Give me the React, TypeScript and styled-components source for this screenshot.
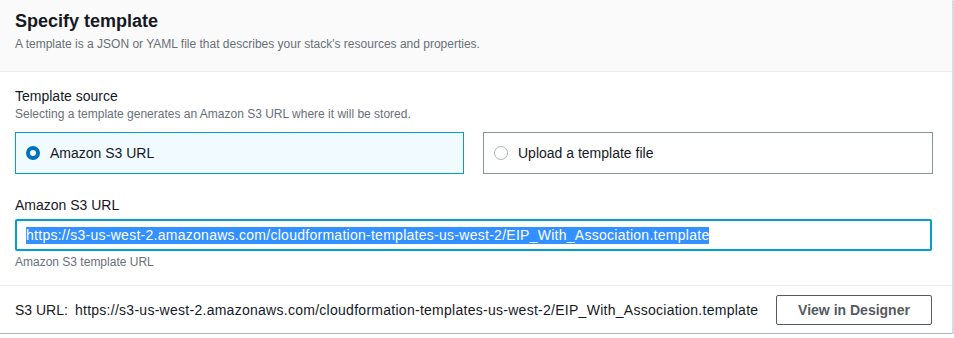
import React from "react";
import styled, { createGlobalStyle } from "styled-components";

const GlobalStyle = createGlobalStyle`
  html, body { margin: 0; padding: 0; background: #ffffff; }
  body { font-family: "Liberation Sans", Arial, sans-serif; color: #16191f; }
  * { box-sizing: border-box; }
`;

const Card = styled.section`
  width: 953px;
  height: 334px;
  background: #ffffff;
  border-right: 1px solid #d5dbdb;
  border-bottom: 1px solid #aab7b8;
  box-shadow: 1px 1px 1px 0 rgba(0, 28, 36, 0.15);
  display: flex;
  flex-direction: column;
`;

const Header = styled.header`
  height: 72px;
  background: #fafafa;
  border-bottom: 1px solid #eaeded;
  padding: 10px 20px 0 15px;
`;

const Title = styled.h2`
  margin: 0;
  font-size: 18px;
  line-height: 22px;
  font-weight: 700;
  color: #16191f;
`;

const Description = styled.p<{ $top?: number }>`
  margin: ${(p) => p.$top ?? 0}px 0 0;
  font-size: 12px;
  line-height: 16px;
  color: #687078;
`;

const Body = styled.div`
  padding: 14px 20px 0 15px;
  display: flex;
  flex-direction: column;
`;

const Label = styled.div`
  font-size: 14px;
  line-height: 20px;
  color: #16191f;
`;

const TileGrid = styled.div`
  margin-top: 10px;
  display: grid;
  grid-template-columns: 449px 450px;
  column-gap: 19px;
`;

const Tile = styled.label<{ $selected?: boolean }>`
  height: 42px;
  display: flex;
  align-items: center;
  gap: 10px;
  padding-left: 10px;
  border: 1px solid ${(p) => (p.$selected ? "#00a1c9" : "#879596")};
  background: ${(p) => (p.$selected ? "#f1faff" : "#ffffff")};
  font-size: 14px;
  color: #16191f;
`;

const Radio = styled.span<{ $checked?: boolean }>`
  width: 14px;
  height: 14px;
  border-radius: 50%;
  flex: none;
  background: #ffffff;
  border: ${(p) => (p.$checked ? "4px solid #0073bb" : "1px solid #aab7b8")};
`;

const Field = styled.div`
  margin-top: 21px;
  display: flex;
  flex-direction: column;
`;

const InputBox = styled.div`
  margin-top: 4px;
  height: 32px;
  border: 2px solid #00a1c9;
  border-radius: 2px;
  padding-left: 9px;
  display: flex;
  align-items: center;
  font-size: 14px;
  color: #16191f;
`;

const Selected = styled.span`
  background: #3390ff;
  color: #ffffff;
  line-height: 17px;
  letter-spacing: 0.27px;
  white-space: nowrap;
`;

const Footer = styled.div`
  margin-top: 15px;
  border-top: 1px solid #eaeded;
  padding: 9px 20px 0 15px;
  display: flex;
  align-items: center;
  justify-content: space-between;
`;

const UrlLine = styled.div`
  display: flex;
  gap: 7px;
  font-size: 14px;
  line-height: 20px;
  color: #16191f;
`;

const UrlText = styled.span`
  letter-spacing: 0.27px;
`;

const Button = styled.button`
  width: 156px;
  height: 30px;
  border: 1px solid #545b64;
  border-radius: 2px;
  background: #ffffff;
  color: #545b64;
  font-family: "Liberation Sans", Arial, sans-serif;
  font-weight: 700;
  font-size: 14px;
  padding: 0;
  cursor: pointer;
`;

const URL =
  "https://s3-us-west-2.amazonaws.com/cloudformation-templates-us-west-2/EIP_With_Association.template";

export default function App() {
  return (
    <>
      <GlobalStyle />
      <Card>
        <Header>
          <Title>Specify template</Title>
          <Description $top={4}>
            A template is a JSON or YAML file that describes your stack's resources and properties.
          </Description>
        </Header>
        <Body>
          <Label>Template source</Label>
          <Description $top={0}>
            Selecting a template generates an Amazon S3 URL where it will be stored.
          </Description>
          <TileGrid>
            <Tile $selected>
              <Radio $checked />
              Amazon S3 URL
            </Tile>
            <Tile>
              <Radio />
              Upload a template file
            </Tile>
          </TileGrid>
          <Field>
            <Label>Amazon S3 URL</Label>
            <InputBox>
              <Selected>{URL}</Selected>
            </InputBox>
            <Description $top={3}>Amazon S3 template URL</Description>
          </Field>
        </Body>
        <Footer>
          <UrlLine>
            <span>S3 URL:</span>
            <UrlText>{URL}</UrlText>
          </UrlLine>
          <Button>View in Designer</Button>
        </Footer>
      </Card>
    </>
  );
}
